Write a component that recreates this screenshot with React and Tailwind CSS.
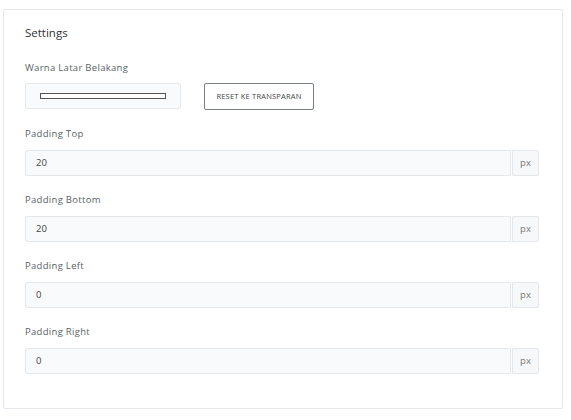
import React from 'react';

const fields = [
  { label: 'Padding Top', value: '20' },
  { label: 'Padding Bottom', value: '20' },
  { label: 'Padding Left', value: '0' },
  { label: 'Padding Right', value: '0' },
];

const PxInput = ({ label, value }) => (
  <div className="mt-[16px]">
    <div className="h-4 leading-4 text-[9.5px] tracking-[0.3px] text-[#5a5f66]">{label}</div>
    <div className="mt-[8px] flex h-[26px]">
      <div className="flex flex-1 items-center rounded-l-[2px] border border-[#e4e8ec] bg-[#f9fafb] pl-[10px] text-[9.5px] text-[#444]">
        {value}
      </div>
      <div className="ml-px flex w-[27px] items-center justify-center rounded-r-[2px] border border-[#e4e8ec] bg-[#f7f8fa] text-[9.5px] text-[#777]">
        px
      </div>
    </div>
  </div>
);

const App = () => {
  return (
    <div className="min-h-screen bg-white pl-[3px] pt-[9px]" style={{ fontFamily: '"Open Sans", "Liberation Sans", sans-serif' }}>
      <div className="w-[560px] rounded-[2px] border border-[#e4e8ec] pl-[21px] pr-[23px] pt-[15px] pb-[34px]">
        <div className="h-4 leading-4 text-[11.5px] text-[#333]">Settings</div>

        <div className="mt-[19px] h-4 leading-4 text-[9.5px] tracking-[0.3px] text-[#5a5f66]">Warna Latar Belakang</div>
        <div className="mt-[7px] flex items-start">
          <div className="flex h-[26px] w-[156px] items-center justify-center rounded-[2px] border border-[#e8ebee] bg-[#f9fafb]">
            <div className="h-[6px] w-[126px] border border-[#555] bg-white" />
          </div>
          <button className="ml-[23px] h-[27px] w-[110px] rounded-[2px] border border-[#7a7f85] bg-white text-[7.5px] tracking-[0.2px] text-[#444]">
            RESET KE TRANSPARAN
          </button>
        </div>

        <div>
          {fields.map((f) => (
            <PxInput key={f.label} label={f.label} value={f.value} />
          ))}
        </div>
      </div>
    </div>
  );
};

export default App;
